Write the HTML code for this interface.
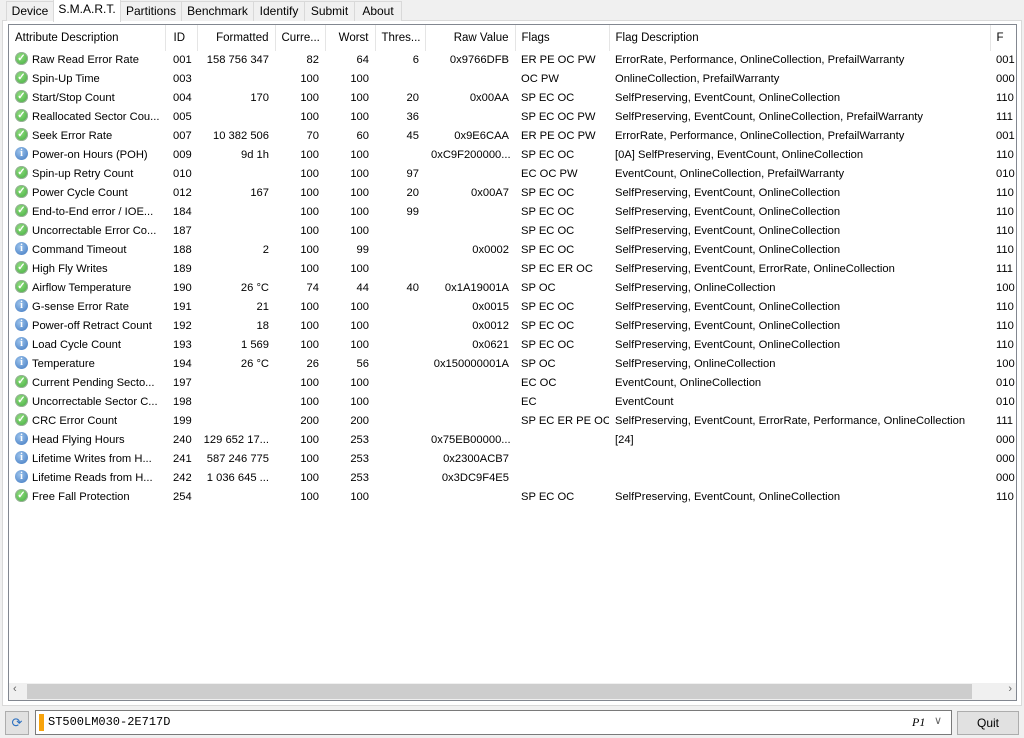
<!DOCTYPE html><html><head><meta charset="utf-8"><style>
body{margin:0;width:1024px;height:738px;background:#f0f0f0;font:11.2px "Liberation Sans",sans-serif;color:#000;position:relative;overflow:hidden}
.tabs{position:absolute;top:0;left:0;height:20px}
.tab{position:absolute;top:1px;height:19px;line-height:18px;border:1px solid #d9d9d9;border-bottom:none;text-align:center;background:#f0f0f0;font-size:12px}
.tab.sel{top:-1px;height:22px;background:#fff;border-color:#d9d9d9;z-index:2}
.panel{position:absolute;left:2px;top:20px;width:1018px;height:684px;background:#fff;border:1px solid #d9d9d9}
.list{position:absolute;left:8px;top:24px;width:1007px;height:675px;border:1px solid #828790;background:#fff;overflow:hidden}
table{border-collapse:collapse;table-layout:fixed;position:absolute;left:0;top:0;width:1100px}
tr{height:19px}
td{height:19px;padding:0 6px;white-space:nowrap;overflow:hidden;line-height:19px;vertical-align:middle}
tr.h{height:25px}
tr.h td{height:25px;border-right:1px solid #e5e5e5;line-height:26px;font-size:11.5px}
td:nth-child(2){padding-left:8px}
.r{text-align:right}
.i{display:inline-block;width:13px;height:13px;border-radius:50%;vertical-align:middle;margin:-3px 4px 0 0;text-align:center;color:#fff;font:bold 10px/13px "Liberation Serif",serif}
.g{background:radial-gradient(circle at 40% 35%,#8fdc7e,#3da93a);box-shadow:0 0 0 1px #9ab09a inset}
.b{background:radial-gradient(circle at 40% 35%,#9cc3ec,#3f78c0)}
.sb{position:absolute;left:0;top:658px;width:1007px;height:17px;background:#f0f0f0}
.th{position:absolute;left:18px;top:1px;width:945px;height:15px;background:#cdcdcd}
</style></head><body>
<div class="panel"></div>
<div class="tabs">
<div class="tab" style="left:6px;width:46px">Device</div>
<div class="tab sel" style="left:53px;width:66px">S.M.A.R.T.</div>
<div class="tab" style="left:120px;width:60px">Partitions</div>
<div class="tab" style="left:181px;width:71px">Benchmark</div>
<div class="tab" style="left:253px;width:50px">Identify</div>
<div class="tab" style="left:304px;width:49px">Submit</div>
<div class="tab" style="left:354px;width:46px">About</div>
</div>
<div class="list">
<table>
<colgroup><col style="width:156px"><col style="width:32px"><col style="width:78px"><col style="width:50px"><col style="width:50px"><col style="width:50px"><col style="width:90px"><col style="width:94px"><col style="width:381px"><col style="width:119px"></colgroup>
<tr class="h"><td>Attribute Description</td><td>ID</td><td class="r">Formatted</td><td class="r">Curre...</td><td class="r">Worst</td><td>Thres...</td><td class="r">Raw Value</td><td>Flags</td><td>Flag Description</td><td>F</td></tr>
<tr><td><span class="i g">✓</span>Raw Read Error Rate</td><td>001</td><td class="r">158 756 347</td><td class="r">82</td><td class="r">64</td><td class="r">6</td><td class="r">0x9766DFB</td><td>ER PE OC PW</td><td>ErrorRate, Performance, OnlineCollection, PrefailWarranty</td><td>001</td></tr>
<tr><td><span class="i g">✓</span>Spin-Up Time</td><td>003</td><td class="r"></td><td class="r">100</td><td class="r">100</td><td class="r"></td><td class="r"></td><td>OC PW</td><td>OnlineCollection, PrefailWarranty</td><td>000</td></tr>
<tr><td><span class="i g">✓</span>Start/Stop Count</td><td>004</td><td class="r">170</td><td class="r">100</td><td class="r">100</td><td class="r">20</td><td class="r">0x00AA</td><td>SP EC OC</td><td>SelfPreserving, EventCount, OnlineCollection</td><td>110</td></tr>
<tr><td><span class="i g">✓</span>Reallocated Sector Cou...</td><td>005</td><td class="r"></td><td class="r">100</td><td class="r">100</td><td class="r">36</td><td class="r"></td><td>SP EC OC PW</td><td>SelfPreserving, EventCount, OnlineCollection, PrefailWarranty</td><td>111</td></tr>
<tr><td><span class="i g">✓</span>Seek Error Rate</td><td>007</td><td class="r">10 382 506</td><td class="r">70</td><td class="r">60</td><td class="r">45</td><td class="r">0x9E6CAA</td><td>ER PE OC PW</td><td>ErrorRate, Performance, OnlineCollection, PrefailWarranty</td><td>001</td></tr>
<tr><td><span class="i b">i</span>Power-on Hours (POH)</td><td>009</td><td class="r">9d 1h</td><td class="r">100</td><td class="r">100</td><td class="r"></td><td class="r">0xC9F200000...</td><td>SP EC OC</td><td>[0A] SelfPreserving, EventCount, OnlineCollection</td><td>110</td></tr>
<tr><td><span class="i g">✓</span>Spin-up Retry Count</td><td>010</td><td class="r"></td><td class="r">100</td><td class="r">100</td><td class="r">97</td><td class="r"></td><td>EC OC PW</td><td>EventCount, OnlineCollection, PrefailWarranty</td><td>010</td></tr>
<tr><td><span class="i g">✓</span>Power Cycle Count</td><td>012</td><td class="r">167</td><td class="r">100</td><td class="r">100</td><td class="r">20</td><td class="r">0x00A7</td><td>SP EC OC</td><td>SelfPreserving, EventCount, OnlineCollection</td><td>110</td></tr>
<tr><td><span class="i g">✓</span>End-to-End error / IOE...</td><td>184</td><td class="r"></td><td class="r">100</td><td class="r">100</td><td class="r">99</td><td class="r"></td><td>SP EC OC</td><td>SelfPreserving, EventCount, OnlineCollection</td><td>110</td></tr>
<tr><td><span class="i g">✓</span>Uncorrectable Error Co...</td><td>187</td><td class="r"></td><td class="r">100</td><td class="r">100</td><td class="r"></td><td class="r"></td><td>SP EC OC</td><td>SelfPreserving, EventCount, OnlineCollection</td><td>110</td></tr>
<tr><td><span class="i b">i</span>Command Timeout</td><td>188</td><td class="r">2</td><td class="r">100</td><td class="r">99</td><td class="r"></td><td class="r">0x0002</td><td>SP EC OC</td><td>SelfPreserving, EventCount, OnlineCollection</td><td>110</td></tr>
<tr><td><span class="i g">✓</span>High Fly Writes</td><td>189</td><td class="r"></td><td class="r">100</td><td class="r">100</td><td class="r"></td><td class="r"></td><td>SP EC ER OC</td><td>SelfPreserving, EventCount, ErrorRate, OnlineCollection</td><td>111</td></tr>
<tr><td><span class="i g">✓</span>Airflow Temperature</td><td>190</td><td class="r">26 °C</td><td class="r">74</td><td class="r">44</td><td class="r">40</td><td class="r">0x1A19001A</td><td>SP OC</td><td>SelfPreserving, OnlineCollection</td><td>100</td></tr>
<tr><td><span class="i b">i</span>G-sense Error Rate</td><td>191</td><td class="r">21</td><td class="r">100</td><td class="r">100</td><td class="r"></td><td class="r">0x0015</td><td>SP EC OC</td><td>SelfPreserving, EventCount, OnlineCollection</td><td>110</td></tr>
<tr><td><span class="i b">i</span>Power-off Retract Count</td><td>192</td><td class="r">18</td><td class="r">100</td><td class="r">100</td><td class="r"></td><td class="r">0x0012</td><td>SP EC OC</td><td>SelfPreserving, EventCount, OnlineCollection</td><td>110</td></tr>
<tr><td><span class="i b">i</span>Load Cycle Count</td><td>193</td><td class="r">1 569</td><td class="r">100</td><td class="r">100</td><td class="r"></td><td class="r">0x0621</td><td>SP EC OC</td><td>SelfPreserving, EventCount, OnlineCollection</td><td>110</td></tr>
<tr><td><span class="i b">i</span>Temperature</td><td>194</td><td class="r">26 °C</td><td class="r">26</td><td class="r">56</td><td class="r"></td><td class="r">0x150000001A</td><td>SP OC</td><td>SelfPreserving, OnlineCollection</td><td>100</td></tr>
<tr><td><span class="i g">✓</span>Current Pending Secto...</td><td>197</td><td class="r"></td><td class="r">100</td><td class="r">100</td><td class="r"></td><td class="r"></td><td>EC OC</td><td>EventCount, OnlineCollection</td><td>010</td></tr>
<tr><td><span class="i g">✓</span>Uncorrectable Sector C...</td><td>198</td><td class="r"></td><td class="r">100</td><td class="r">100</td><td class="r"></td><td class="r"></td><td>EC</td><td>EventCount</td><td>010</td></tr>
<tr><td><span class="i g">✓</span>CRC Error Count</td><td>199</td><td class="r"></td><td class="r">200</td><td class="r">200</td><td class="r"></td><td class="r"></td><td>SP EC ER PE OC</td><td>SelfPreserving, EventCount, ErrorRate, Performance, OnlineCollection</td><td>111</td></tr>
<tr><td><span class="i b">i</span>Head Flying Hours</td><td>240</td><td class="r">129 652 17...</td><td class="r">100</td><td class="r">253</td><td class="r"></td><td class="r">0x75EB00000...</td><td></td><td>[24]</td><td>000</td></tr>
<tr><td><span class="i b">i</span>Lifetime Writes from H...</td><td>241</td><td class="r">587 246 775</td><td class="r">100</td><td class="r">253</td><td class="r"></td><td class="r">0x2300ACB7</td><td></td><td></td><td>000</td></tr>
<tr><td><span class="i b">i</span>Lifetime Reads from H...</td><td>242</td><td class="r">1 036 645 ...</td><td class="r">100</td><td class="r">253</td><td class="r"></td><td class="r">0x3DC9F4E5</td><td></td><td></td><td>000</td></tr>
<tr><td><span class="i g">✓</span>Free Fall Protection</td><td>254</td><td class="r"></td><td class="r">100</td><td class="r">100</td><td class="r"></td><td class="r"></td><td>SP EC OC</td><td>SelfPreserving, EventCount, OnlineCollection</td><td>110</td></tr>
</table>
<div class="sb"><span style="position:absolute;left:4px;top:0;font-size:11px;color:#606060">‹</span><div class="th"></div><span style="position:absolute;right:4px;top:0;font-size:11px;color:#606060">›</span></div>
</div>
<div style="position:absolute;left:5px;top:711px;width:22px;height:22px;border:1px solid #adadad;background:#e1e1e1;color:#2a6fc0;text-align:center;line-height:22px;font-size:13px">⟳</div>
<div style="position:absolute;left:35px;top:710px;width:915px;height:23px;border:1px solid #7a7a7a;background:#fff">
<div style="position:absolute;left:3px;top:3px;width:5px;height:17px;background:#f7a30c"></div>
<span style="position:absolute;left:12px;top:4px;font:12px 'Liberation Mono',monospace">ST500LM030-2E717D</span>
<span style="position:absolute;left:876px;top:4px;font:italic 12px 'Liberation Serif',serif">P1</span>
<span style="position:absolute;left:898px;top:3px;color:#666;font-size:11px">∨</span>
</div>
<div style="position:absolute;left:957px;top:711px;width:60px;height:22px;border:1px solid #adadad;background:#e1e1e1;text-align:center;line-height:22px;font-size:12px">Quit</div>
</body></html>
